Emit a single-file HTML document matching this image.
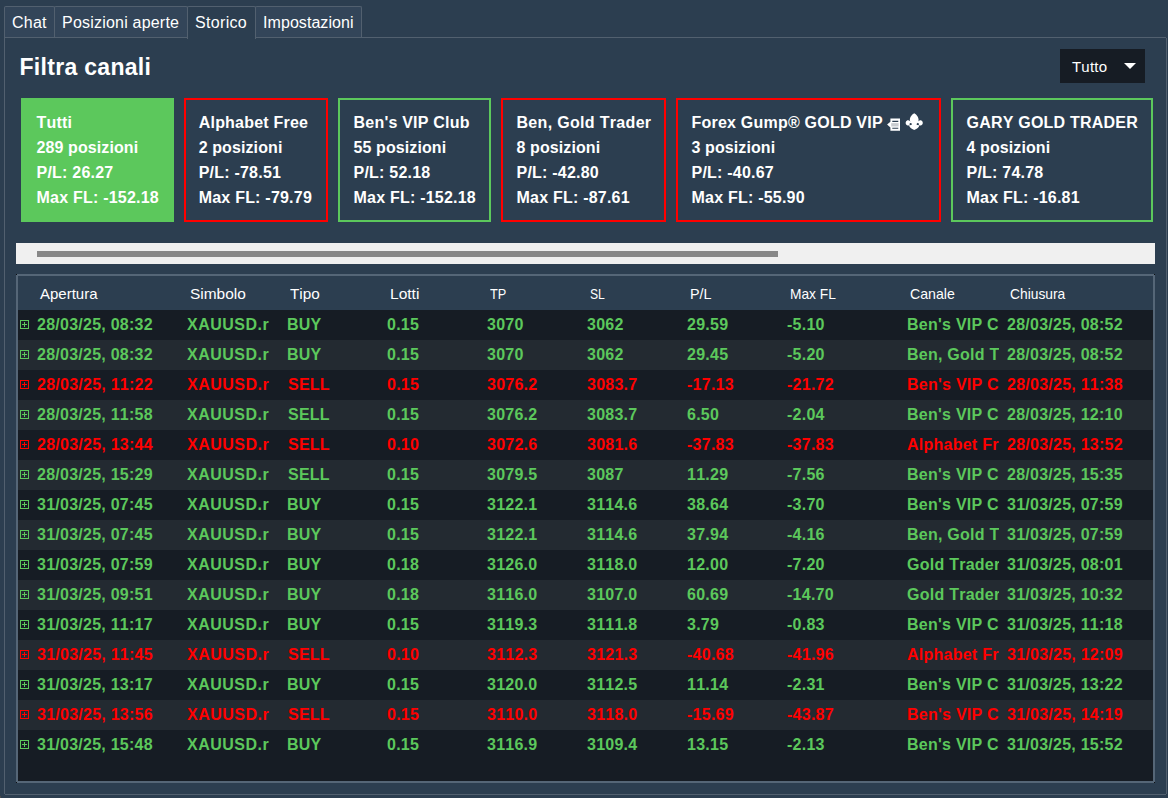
<!DOCTYPE html>
<html lang="it"><head><meta charset="utf-8"><title>Storico</title>
<style>
*{box-sizing:border-box;margin:0;padding:0}
html,body{width:1168px;height:798px;overflow:hidden;background:#2c3e50}
body{position:relative;font-kerning:none;text-rendering:optimizeSpeed;font-family:"Liberation Sans",Arial,sans-serif;color:#fff;font-size:16px}
.tabs{position:absolute;left:4px;top:6px;height:32px}
.tab{position:absolute;top:0;height:32px;border:1px solid #52606f;border-bottom:none;border-radius:2px 2px 0 0;background:#334559;font-size:16px;line-height:32px;text-align:left;padding-left:7.1px;letter-spacing:.2px;white-space:nowrap}
.tab.sel{background:#2c3e50;height:33px}
.panel{position:absolute;left:4px;top:37px;width:1163px;height:758px;border:1px solid #52606f}
h1{position:absolute;left:19.5px;top:52.5px;font-size:23px;line-height:28px;letter-spacing:.3px;font-weight:bold;white-space:nowrap}
.dd{position:absolute;left:1060px;top:49px;width:85px;height:34px;background:#161c24;font-size:15px;line-height:36px;padding-left:12px;letter-spacing:.2px}
.dd:after{content:"";position:absolute;left:63.5px;top:14px;border-left:6px solid transparent;border-right:6px solid transparent;border-top:6.5px solid #fff}
.card{position:absolute;top:98px;height:124px;border:2px solid #5cc85c;padding:10px 0 0 13.5px;font-weight:bold;font-size:16px;line-height:25px;white-space:nowrap;letter-spacing:.22px}
.card .pz{letter-spacing:.1px}
.card.r{border-color:#ff0000}
.card.all{background:#5cc85c}
.sbar{position:absolute;left:16px;top:243px;width:1139px;height:21px;background:#f0f0f0}
.thumb{position:absolute;left:21px;top:8px;width:741px;height:6px;background:#888}
.grid{position:absolute;left:16px;top:274px;width:1139px;height:509px;border:2px solid #556677;background:#161c24;overflow:hidden}
.ghead{position:absolute;left:0;top:0;width:100%;height:34px;background:#2c3e50;font-size:15px}
.ghead span{position:absolute;top:8px;transform-origin:0 50%;line-height:20px;white-space:nowrap}
.row{position:absolute;left:0;width:100%;height:30px;font-weight:bold;font-size:16px;letter-spacing:.25px}
.row.alt{background:#232a31}
.row.g{color:#5cc85c}
.row.r{color:#ff0000}
.row span{position:absolute;top:0;line-height:30px;white-space:nowrap;overflow:hidden}
.ex{position:absolute;left:2px;top:10px;width:9px;height:9px;border:1px solid currentColor}
.ex:before{content:"";position:absolute;left:1px;top:3px;width:5px;height:1px;background:currentColor}
.ex:after{content:"";position:absolute;left:3px;top:1px;width:1px;height:5px;background:currentColor}
.card .l1{position:relative}
.ic{position:absolute;left:194px;top:2px}
.dot{position:absolute;width:1px;height:1px;background:#0c0f13}
.pc{position:absolute;width:1px;height:1px;background:#2c3e50}
.art{position:absolute;left:0;top:796px;width:1px;height:2px;background:#4a4a4a}
.row .c1{letter-spacing:.5px}
.row .sell{padding-left:1px}

</style></head>
<body>
<div class="tabs">
<div class="tab" style="left:0;width:51px">Chat</div>
<div class="tab" style="left:50px;width:134px">Posizioni aperte</div>
<div class="tab" style="left:251px;width:107px;letter-spacing:.05px">Impostazioni</div>
</div>
<div class="panel"></div>
<div class="tabs"><div class="tab sel" style="left:183px;width:69px;letter-spacing:.3px">Storico</div></div>
<i class="pc" style="left:4px;top:794px"></i><i class="pc" style="left:1166px;top:794px"></i><i class="pc" style="left:1166px;top:37px"></i><i class="art"></i>
<h1>Filtra canali</h1>
<div class="dd">Tutto</div>
<div>
<div class="card all" style="left:21px;width:153px"><div class="l1">Tutti</div><div class="pz">289 posizioni</div><div>P/L: 26.27</div><div>Max FL: -152.18</div></div>
<div class="card r" style="left:184px;width:144px;padding-left:12.7px"><div class="l1">Alphabet Free</div><div class="pz">2 posizioni</div><div>P/L: -78.51</div><div>Max FL: -79.79</div></div>
<div class="card g" style="left:338px;width:153px"><div class="l1">Ben's VIP Club</div><div class="pz">55 posizioni</div><div>P/L: 52.18</div><div>Max FL: -152.18</div></div>
<div class="card r" style="left:501px;width:165px"><div class="l1" style="letter-spacing:.32px">Ben, Gold Trader</div><div class="pz">8 posizioni</div><div>P/L: -42.80</div><div>Max FL: -87.61</div></div>
<div class="card r" style="left:676px;width:265px"><div class="l1">Forex Gump® GOLD VIP<svg class="ic" width="40" height="20" viewBox="0 0 40 20"><path fill="#fff" d="M1.1,12.6 L4.4,9.8 L4.4,6.6 H14 V18.7 H4.4 V15.4 Z"/><path fill="#2c3e50" d="M6.3,8.8h6v1.1h-6z M6.3,15.7h6v1.1h-6z"/><path fill="#c9ccd0" d="M5.2,11.1h7.4v3.4h-7.4z"/><path fill="#fff" d="M5,11 L3,12.6 L5,14.4 Z"/><g transform="translate(19.5,1.3) scale(0.97)"><path fill="#fff" d="M9,0 C11,1 13.7,4 13.5,7 C13.4,8.8 12.4,10 11.6,11 L11,12.8 H7 L6.4,11 C5.6,10 4.6,8.8 4.5,7 C4.3,4 7,1 9,0Z"/><path fill="#fff" d="M7.2,12.4 C6.6,8.6 3.6,6 1.3,7.6 C-0.6,9 0,12.2 2.4,12.6 C3.6,12.8 4.4,12.3 5,11.6 C5.6,12.4 6.4,12.9 7.2,12.4Z M10.8,12.4 C11.4,8.6 14.4,6 16.7,7.6 C18.6,9 18,12.2 15.6,12.6 C14.4,12.8 13.6,12.3 13,11.6 C12.4,12.4 11.6,12.9 10.8,12.4Z"/><circle cx="5.3" cy="11.2" r="1.15" fill="#2c3e50"/><circle cx="12.7" cy="11.2" r="1.15" fill="#2c3e50"/><path fill="#fff" d="M3.6,12.2 L6,12 H12 L14.4,12.2 Q13.6,15.2 9,17.1 Q4.4,15.2 3.6,12.2Z"/></g></svg>
</div><div class="pz">3 posizioni</div><div>P/L: -40.67</div><div>Max FL: -55.90</div></div>
<div class="card g" style="left:951px;width:202px"><div class="l1">GARY GOLD TRADER</div><div class="pz">4 posizioni</div><div>P/L: 74.78</div><div>Max FL: -16.81</div></div>
<div class="sbar"><div class="thumb"></div></div>
<div class="grid">
<div class="ghead"><span style="left:22px">Apertura</span><span style="left:172px;transform:scaleX(1.03)">Simbolo</span><span style="left:272px;transform:scaleX(1.02)">Tipo</span><span style="left:372px;transform:scaleX(1.037)">Lotti</span><span style="left:472px;transform:scaleX(0.85)">TP</span><span style="left:572px;transform:scaleX(0.81)">SL</span><span style="left:672px;transform:scaleX(0.954)">P/L</span><span style="left:772px;transform:scaleX(0.917)">Max FL</span><span style="left:892px;transform:scaleX(0.942)">Canale</span><span style="left:992px;transform:scaleX(0.92)">Chiusura</span></div>
<div class="row g" style="top:34px"><i class="ex"></i><span class="c0" style="left:19px;width:150px">28/03/25, 08:32</span><span class="c1" style="left:169px;width:100px">XAUUSD.r</span><span class="c2" style="left:269px;width:100px">BUY</span><span class="c3" style="left:369px;width:100px">0.15</span><span class="c4" style="left:469px;width:100px">3070</span><span class="c5" style="left:569px;width:100px">3062</span><span class="c6" style="left:669px;width:100px">29.59</span><span class="c7" style="left:769px;width:120px">-5.10</span><span class="c8" style="left:889px;width:92.2px">Ben's VIP Club</span><span class="c9" style="left:989px;width:150px">28/03/25, 08:52</span></div>
<div class="row g alt" style="top:64px"><i class="ex"></i><span class="c0" style="left:19px;width:150px">28/03/25, 08:32</span><span class="c1" style="left:169px;width:100px">XAUUSD.r</span><span class="c2" style="left:269px;width:100px">BUY</span><span class="c3" style="left:369px;width:100px">0.15</span><span class="c4" style="left:469px;width:100px">3070</span><span class="c5" style="left:569px;width:100px">3062</span><span class="c6" style="left:669px;width:100px">29.45</span><span class="c7" style="left:769px;width:120px">-5.20</span><span class="c8" style="left:889px;width:92.2px">Ben, Gold Trader</span><span class="c9" style="left:989px;width:150px">28/03/25, 08:52</span></div>
<div class="row r" style="top:94px"><i class="ex"></i><span class="c0" style="left:19px;width:150px">28/03/25, 11:22</span><span class="c1" style="left:169px;width:100px">XAUUSD.r</span><span class="c2 sell" style="left:269px;width:100px">SELL</span><span class="c3" style="left:369px;width:100px">0.15</span><span class="c4" style="left:469px;width:100px">3076.2</span><span class="c5" style="left:569px;width:100px">3083.7</span><span class="c6" style="left:669px;width:100px">-17.13</span><span class="c7" style="left:769px;width:120px">-21.72</span><span class="c8" style="left:889px;width:92.2px">Ben's VIP Club</span><span class="c9" style="left:989px;width:150px">28/03/25, 11:38</span></div>
<div class="row g alt" style="top:124px"><i class="ex"></i><span class="c0" style="left:19px;width:150px">28/03/25, 11:58</span><span class="c1" style="left:169px;width:100px">XAUUSD.r</span><span class="c2 sell" style="left:269px;width:100px">SELL</span><span class="c3" style="left:369px;width:100px">0.15</span><span class="c4" style="left:469px;width:100px">3076.2</span><span class="c5" style="left:569px;width:100px">3083.7</span><span class="c6" style="left:669px;width:100px">6.50</span><span class="c7" style="left:769px;width:120px">-2.04</span><span class="c8" style="left:889px;width:92.2px">Ben's VIP Club</span><span class="c9" style="left:989px;width:150px">28/03/25, 12:10</span></div>
<div class="row r" style="top:154px"><i class="ex"></i><span class="c0" style="left:19px;width:150px">28/03/25, 13:44</span><span class="c1" style="left:169px;width:100px">XAUUSD.r</span><span class="c2 sell" style="left:269px;width:100px">SELL</span><span class="c3" style="left:369px;width:100px">0.10</span><span class="c4" style="left:469px;width:100px">3072.6</span><span class="c5" style="left:569px;width:100px">3081.6</span><span class="c6" style="left:669px;width:100px">-37.83</span><span class="c7" style="left:769px;width:120px">-37.83</span><span class="c8" style="left:889px;width:92.2px">Alphabet Free</span><span class="c9" style="left:989px;width:150px">28/03/25, 13:52</span></div>
<div class="row g alt" style="top:184px"><i class="ex"></i><span class="c0" style="left:19px;width:150px">28/03/25, 15:29</span><span class="c1" style="left:169px;width:100px">XAUUSD.r</span><span class="c2 sell" style="left:269px;width:100px">SELL</span><span class="c3" style="left:369px;width:100px">0.15</span><span class="c4" style="left:469px;width:100px">3079.5</span><span class="c5" style="left:569px;width:100px">3087</span><span class="c6" style="left:669px;width:100px">11.29</span><span class="c7" style="left:769px;width:120px">-7.56</span><span class="c8" style="left:889px;width:92.2px">Ben's VIP Club</span><span class="c9" style="left:989px;width:150px">28/03/25, 15:35</span></div>
<div class="row g" style="top:214px"><i class="ex"></i><span class="c0" style="left:19px;width:150px">31/03/25, 07:45</span><span class="c1" style="left:169px;width:100px">XAUUSD.r</span><span class="c2" style="left:269px;width:100px">BUY</span><span class="c3" style="left:369px;width:100px">0.15</span><span class="c4" style="left:469px;width:100px">3122.1</span><span class="c5" style="left:569px;width:100px">3114.6</span><span class="c6" style="left:669px;width:100px">38.64</span><span class="c7" style="left:769px;width:120px">-3.70</span><span class="c8" style="left:889px;width:92.2px">Ben's VIP Club</span><span class="c9" style="left:989px;width:150px">31/03/25, 07:59</span></div>
<div class="row g alt" style="top:244px"><i class="ex"></i><span class="c0" style="left:19px;width:150px">31/03/25, 07:45</span><span class="c1" style="left:169px;width:100px">XAUUSD.r</span><span class="c2" style="left:269px;width:100px">BUY</span><span class="c3" style="left:369px;width:100px">0.15</span><span class="c4" style="left:469px;width:100px">3122.1</span><span class="c5" style="left:569px;width:100px">3114.6</span><span class="c6" style="left:669px;width:100px">37.94</span><span class="c7" style="left:769px;width:120px">-4.16</span><span class="c8" style="left:889px;width:92.2px">Ben, Gold Trader</span><span class="c9" style="left:989px;width:150px">31/03/25, 07:59</span></div>
<div class="row g" style="top:274px"><i class="ex"></i><span class="c0" style="left:19px;width:150px">31/03/25, 07:59</span><span class="c1" style="left:169px;width:100px">XAUUSD.r</span><span class="c2" style="left:269px;width:100px">BUY</span><span class="c3" style="left:369px;width:100px">0.18</span><span class="c4" style="left:469px;width:100px">3126.0</span><span class="c5" style="left:569px;width:100px">3118.0</span><span class="c6" style="left:669px;width:100px">12.00</span><span class="c7" style="left:769px;width:120px">-7.20</span><span class="c8" style="left:889px;width:92.2px">Gold Trader</span><span class="c9" style="left:989px;width:150px">31/03/25, 08:01</span></div>
<div class="row g alt" style="top:304px"><i class="ex"></i><span class="c0" style="left:19px;width:150px">31/03/25, 09:51</span><span class="c1" style="left:169px;width:100px">XAUUSD.r</span><span class="c2" style="left:269px;width:100px">BUY</span><span class="c3" style="left:369px;width:100px">0.18</span><span class="c4" style="left:469px;width:100px">3116.0</span><span class="c5" style="left:569px;width:100px">3107.0</span><span class="c6" style="left:669px;width:100px">60.69</span><span class="c7" style="left:769px;width:120px">-14.70</span><span class="c8" style="left:889px;width:92.2px">Gold Trader</span><span class="c9" style="left:989px;width:150px">31/03/25, 10:32</span></div>
<div class="row g" style="top:334px"><i class="ex"></i><span class="c0" style="left:19px;width:150px">31/03/25, 11:17</span><span class="c1" style="left:169px;width:100px">XAUUSD.r</span><span class="c2" style="left:269px;width:100px">BUY</span><span class="c3" style="left:369px;width:100px">0.15</span><span class="c4" style="left:469px;width:100px">3119.3</span><span class="c5" style="left:569px;width:100px">3111.8</span><span class="c6" style="left:669px;width:100px">3.79</span><span class="c7" style="left:769px;width:120px">-0.83</span><span class="c8" style="left:889px;width:92.2px">Ben's VIP Club</span><span class="c9" style="left:989px;width:150px">31/03/25, 11:18</span></div>
<div class="row r alt" style="top:364px"><i class="ex"></i><span class="c0" style="left:19px;width:150px">31/03/25, 11:45</span><span class="c1" style="left:169px;width:100px">XAUUSD.r</span><span class="c2 sell" style="left:269px;width:100px">SELL</span><span class="c3" style="left:369px;width:100px">0.10</span><span class="c4" style="left:469px;width:100px">3112.3</span><span class="c5" style="left:569px;width:100px">3121.3</span><span class="c6" style="left:669px;width:100px">-40.68</span><span class="c7" style="left:769px;width:120px">-41.96</span><span class="c8" style="left:889px;width:92.2px">Alphabet Free</span><span class="c9" style="left:989px;width:150px">31/03/25, 12:09</span></div>
<div class="row g" style="top:394px"><i class="ex"></i><span class="c0" style="left:19px;width:150px">31/03/25, 13:17</span><span class="c1" style="left:169px;width:100px">XAUUSD.r</span><span class="c2" style="left:269px;width:100px">BUY</span><span class="c3" style="left:369px;width:100px">0.15</span><span class="c4" style="left:469px;width:100px">3120.0</span><span class="c5" style="left:569px;width:100px">3112.5</span><span class="c6" style="left:669px;width:100px">11.14</span><span class="c7" style="left:769px;width:120px">-2.31</span><span class="c8" style="left:889px;width:92.2px">Ben's VIP Club</span><span class="c9" style="left:989px;width:150px">31/03/25, 13:22</span></div>
<div class="row r alt" style="top:424px"><i class="ex"></i><span class="c0" style="left:19px;width:150px">31/03/25, 13:56</span><span class="c1" style="left:169px;width:100px">XAUUSD.r</span><span class="c2 sell" style="left:269px;width:100px">SELL</span><span class="c3" style="left:369px;width:100px">0.15</span><span class="c4" style="left:469px;width:100px">3110.0</span><span class="c5" style="left:569px;width:100px">3118.0</span><span class="c6" style="left:669px;width:100px">-15.69</span><span class="c7" style="left:769px;width:120px">-43.87</span><span class="c8" style="left:889px;width:92.2px">Ben's VIP Club</span><span class="c9" style="left:989px;width:150px">31/03/25, 14:19</span></div>
<div class="row g" style="top:454px"><i class="ex"></i><span class="c0" style="left:19px;width:150px">31/03/25, 15:48</span><span class="c1" style="left:169px;width:100px">XAUUSD.r</span><span class="c2" style="left:269px;width:100px">BUY</span><span class="c3" style="left:369px;width:100px">0.15</span><span class="c4" style="left:469px;width:100px">3116.9</span><span class="c5" style="left:569px;width:100px">3109.4</span><span class="c6" style="left:669px;width:100px">13.15</span><span class="c7" style="left:769px;width:120px">-2.13</span><span class="c8" style="left:889px;width:92.2px">Ben's VIP Club</span><span class="c9" style="left:989px;width:150px">31/03/25, 15:52</span></div>
</div>
<i class="dot" style="left:16px;top:274px"></i><i class="dot" style="left:1154px;top:274px"></i><i class="dot" style="left:16px;top:782px"></i><i class="dot" style="left:1154px;top:782px"></i>
</div>
</body></html>
